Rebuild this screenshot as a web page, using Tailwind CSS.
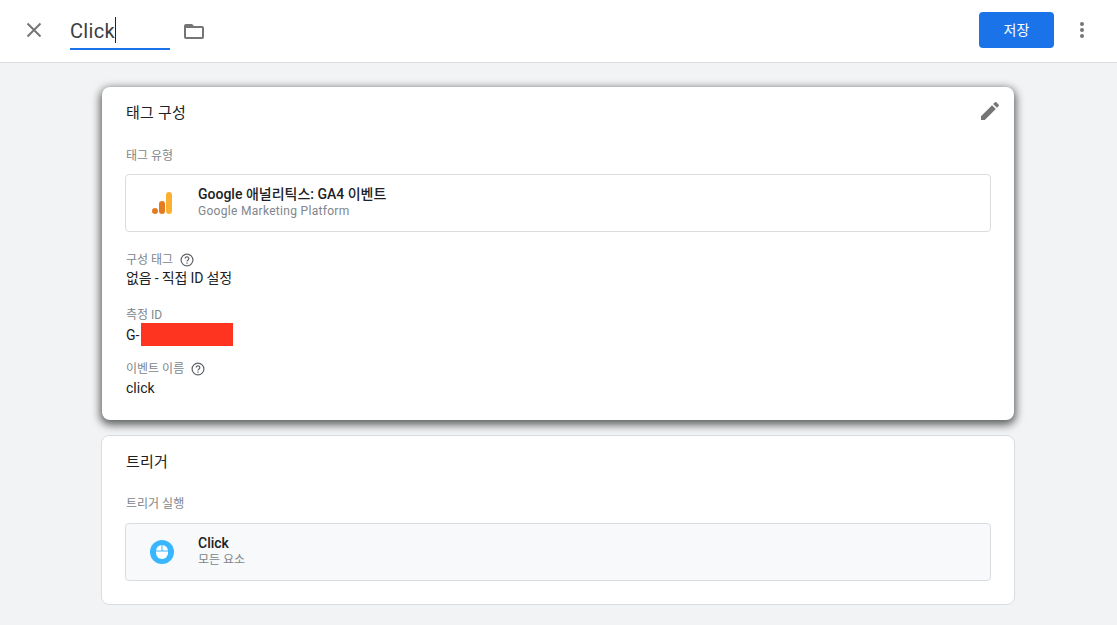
<!DOCTYPE html>
<html lang="ko">
<head>
  <meta charset="UTF-8" />
  <title>Click</title>
  <script src="https://cdn.jsdelivr.net/npm/@tailwindcss/browser@4"></script>
</head>
<body class="bg-[#f1f3f4] h-[625px] overflow-hidden font-['Roboto','Noto_Sans_CJK_KR',sans-serif] text-[#202124]">
  <!-- Top bar -->
  <header class="h-[63px] bg-white border-b border-[#dadce0] flex items-center pl-[24px] pr-[23px] pb-[2px]">
    <svg class="w-[20px] h-[20px] mr-[26px]" viewBox="0 0 20 20" fill="none" stroke="#757575" stroke-width="2"><path d="M3.5 3.5l13 13M16.5 3.5l-13 13"/></svg>
    <div class="w-[100px] h-[38px] border-b-2 border-[#1a73e8] flex items-center mt-[2px] text-[20px] leading-[24px] text-[#3c4043]">
      <span class="tracking-[0.3px] pt-[2px]">Click</span><span class="w-px h-[26px] bg-[#202124]"></span>
    </div>
    <svg class="w-[24px] h-[24px] ml-[12px] mt-[2px]" viewBox="0 0 24 24" fill="#757575"><path d="M10 5l2 2h8a2 2 0 0 1 2 2v9a2 2 0 0 1-2 2H4a2 2 0 0 1-2-2V7a2 2 0 0 1 2-2h6zM4 9v9h16V9H4z"/></svg>
    <button class="ml-auto w-[75px] h-[36px] rounded-[4px] bg-[#1a73e8] text-white text-[14px]">저장</button>
    <svg class="w-[24px] h-[24px] ml-[16px]" viewBox="0 0 24 24" fill="#757575"><circle cx="12" cy="6" r="2"/><circle cx="12" cy="12" r="2"/><circle cx="12" cy="18" r="2"/></svg>
  </header>

  <main class="w-[914px] ml-[101px] pt-[24px]">
    <!-- Tag config card -->
    <section class="relative h-[333px] bg-white rounded-[8px] ml-px w-[912px] shadow-[0_3px_8px_2px_rgba(0,0,0,0.6)] px-[24px] pt-[16px]">
      <h2 class="text-[15px] leading-[20px] tracking-[0.2px]">태그 구성</h2>
      <svg class="absolute top-[12px] right-[12px] w-[24px] h-[24px]" viewBox="0 0 24 24" fill="#757575"><path d="M3 17.25V21h3.75L17.81 9.94l-3.75-3.75L3 17.25zM20.71 7.04a1 1 0 0 0 0-1.41l-2.34-2.34a1 1 0 0 0-1.41 0l-1.83 1.83 3.75 3.75 1.83-1.83z"/></svg>

      <div class="mt-[25px] text-[12px] leading-[16px] text-[#80868b]">태그 유형</div>
      <div class="mt-[10px] -mx-px h-[58px] border border-[#dadce0] rounded-[4px] flex items-center">
        <svg class="w-[24px] h-[24px] ml-[24px]" viewBox="0 0 24 24">
          <rect x="16" y="1" width="6" height="22" rx="3" fill="#fbb034"/>
          <rect x="9" y="10" width="6" height="13" rx="3" fill="#e37c20"/>
          <circle cx="5" cy="20" r="3" fill="#e37c20"/>
        </svg>
        <div class="ml-[24px] -mt-[2px]">
          <div class="text-[14px] leading-[17px] mb-[1px] font-medium">Google 애널리틱스: GA4 이벤트</div>
          <div class="text-[12px] leading-[15px] tracking-[0.3px] text-[#80868b]">Google Marketing Platform</div>
        </div>
      </div>

      <div class="mt-[20px] flex items-center text-[12px] leading-[16px] text-[#80868b]">구성 태그
        <svg class="w-[14px] h-[14px] ml-[7px]" viewBox="0 0 14 14" fill="none" stroke="#5f6368" stroke-width="1.2"><circle cx="7" cy="7" r="5.9"/><path d="M5.2 5.6a1.8 1.8 0 1 1 2.8 1.5c-.6.4-1 .7-1 1.5"/><path d="M7 9.6v1.2"/></svg>
      </div>
      <div class="text-[14px] leading-[20px] tracking-[-0.15px]">없음 - 직접 ID 설정</div>

      <div class="mt-[19px] text-[12px] leading-[16px] text-[#80868b]">측정 ID</div>
      <div class="flex items-center text-[14px] leading-[20px]">G-<span class="ml-[2px] w-[92px] h-[23px] bg-[#ff3420]"></span></div>

      <div class="mt-[15px] flex items-center text-[12px] leading-[16px] text-[#80868b]">이벤트 이름
        <svg class="w-[14px] h-[14px] ml-[7px]" viewBox="0 0 14 14" fill="none" stroke="#5f6368" stroke-width="1.2"><circle cx="7" cy="7" r="5.9"/><path d="M5.2 5.6a1.8 1.8 0 1 1 2.8 1.5c-.6.4-1 .7-1 1.5"/><path d="M7 9.6v1.2"/></svg>
      </div>
      <div class="text-[14px] leading-[20px] mt-[1px]">click</div>
    </section>

    <!-- Trigger card -->
    <section class="mt-[15px] h-[170px] bg-white rounded-[8px] border border-[#dadce0] px-[24px] pt-[16px]">
      <h2 class="text-[15px] leading-[20px] tracking-[0.2px]">트리거</h2>
      <div class="mt-[24px] text-[12px] leading-[16px] text-[#80868b]">트리거 실행</div>
      <div class="mt-[11px] -mx-px h-[58px] bg-[#f8f9fa] border border-[#dadce0] rounded-[4px] flex items-center">
        <svg class="w-[24px] h-[24px] ml-[24px]" viewBox="0 0 24 24">
          <circle cx="12" cy="12" r="12" fill="#38b6ff"/>
          <path d="M12 5a6 6 0 0 0-6 6v2a6 6 0 0 0 12 0v-2a6 6 0 0 0-6-6z" fill="#fff"/>
          <path d="M6 11h12" stroke="#38b6ff" stroke-width="1"/>
          <path d="M12 5v6" stroke="#38b6ff" stroke-width="1"/>
        </svg>
        <div class="ml-[24px] -mt-[2px]">
          <div class="text-[14px] leading-[17px] mb-[1px] font-medium">Click</div>
          <div class="text-[12px] leading-[15px] text-[#80868b]">모든 요소</div>
        </div>
      </div>
    </section>
  </main>
</body>
</html>
